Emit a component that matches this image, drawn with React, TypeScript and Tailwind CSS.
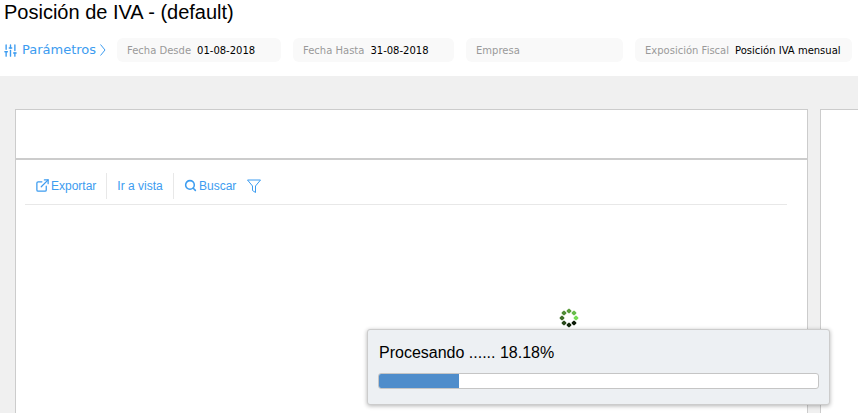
import { ExternalLink, Search, SlidersVertical } from 'lucide-react';

const sans = "font-['Liberation_Sans',Arial,sans-serif]";
const verdana = "font-['DejaVu_Sans',Verdana,sans-serif]";

const spinnerDots = [
  { cls: 'left-[7px] top-0', color: '#5a9c3c' },
  { cls: 'left-[12px] top-[2px]', color: '#66bb4a' },
  { cls: 'left-[14px] top-[7px]', color: '#74dc54' },
  { cls: 'left-[12px] top-[12px]', color: '#0c1a08' },
  { cls: 'left-[7px] top-[14px]', color: '#152a0e' },
  { cls: 'left-[2px] top-[12px]', color: '#2a4a1c' },
  { cls: 'left-0 top-[7px]', color: '#3f6e2a' },
  { cls: 'left-[2px] top-[2px]', color: '#4f8a34' },
];

const FilterField = ({ label, value, width }: { label: string; value?: string; width: string }) => (
  <div className={`flex h-6 items-center gap-[6px] rounded-md bg-[#f9f9f9] pl-[10px] text-[10px] ${width}`}>
    <span className="text-[#999]">{label}</span>
    {value && <span className="text-black">{value}</span>}
  </div>
);

const App = () => (
  <div className="relative h-[413px] w-[858px] overflow-hidden bg-[#f0f0f0]">
    <header className="h-[76px] bg-white pl-1 pt-[1px]">
      <h1 className={`${sans} text-[20px] leading-[23px] text-black`}>Posición de IVA - (default)</h1>
      <div className={`${verdana} mt-[14px] flex items-center`}>
        <div className="flex w-[113px] items-center text-[13px] text-[#3c9cf0]">
          <SlidersVertical className="-ml-[1px] mr-[4px]" size={15} strokeWidth={2.2} />
          <span>Parámetros</span>
          <svg className="ml-[4px]" width="6" height="12" viewBox="0 0 6 12" fill="none" stroke="#3c9cf0" strokeWidth="1">
            <path d="M0.5 0.5L5 6L0.5 11.5" />
          </svg>
        </div>
        <div className="flex gap-3">
          <FilterField label="Fecha Desde" value="01-08-2018" width="w-[164px]" />
          <FilterField label="Fecha Hasta" value="31-08-2018" width="w-[161px]" />
          <FilterField label="Empresa" width="w-[157px]" />
          <FilterField label="Exposición Fiscal" value="Posición IVA mensual" width="w-[217px]" />
        </div>
      </div>
    </header>

    <main className="flex gap-3 pl-[15px] pt-[33px]">
      <section className="h-[400px] w-[793px] shrink-0 border border-[#ccc] bg-white">
        <div className="h-[50px] border-b-2 border-[#ccc]" />
        <div className={`${sans} mx-[9px] mt-[8px] flex h-[37px] w-[762px] items-center border-b border-[#e8e8e8] pb-[1px] text-[12px] text-[#3c9cf0]`}>
          <div className="flex h-[26px] w-[82px] items-center gap-[1px] border-r border-[#e8e8e8] pl-[10px]">
            <ExternalLink size={15} strokeWidth={2} />
            <span>Exportar</span>
          </div>
          <div className="flex h-[26px] w-[67px] items-center justify-center border-r border-[#e8e8e8]">Ir a vista</div>
          <div className="flex items-center gap-[2px] pl-[10px]">
            <Search size={13} strokeWidth={2.8} />
            <span>Buscar</span>
          </div>
          <svg className="ml-[11px]" width="14" height="14" viewBox="0 0 14 14" fill="none" stroke="#3c9cf0" strokeWidth="1">
            <path d="M0.5 1h13L8.5 7v6.5l-3-2V7z" />
          </svg>
        </div>
      </section>
      <section className="h-[400px] w-[60px] shrink-0 border border-[#ccc] bg-white" />
    </main>

    <div className="absolute left-[560px] top-[309px] h-[18px] w-[18px]">
      {spinnerDots.map((dot) => (
        <span
          key={dot.cls}
          className={`absolute h-[4px] w-[4px] rounded-[1px] rotate-45 ${dot.cls}`}
          style={{ backgroundColor: dot.color }}
        />
      ))}
    </div>

    <div className={`${sans} absolute left-[367px] top-[329px] h-[76px] w-[463px] rounded-[3px] border border-[#ccc] bg-[#edf0f3] px-[11px] pt-[14px] shadow-[0_1px_4px_rgba(0,0,0,0.3)]`}>
      <p className="text-[16px] leading-[18px] text-black">Procesando ...... 18.18%</p>
      <div className="-ml-[1px] mt-[11px] h-4 w-[441px] overflow-hidden rounded-[3px] border border-[#c5c5c5] bg-white">
        <div className="h-full w-[18.18%] bg-[#4f8dcb]" />
      </div>
    </div>
  </div>
);

export default App;
